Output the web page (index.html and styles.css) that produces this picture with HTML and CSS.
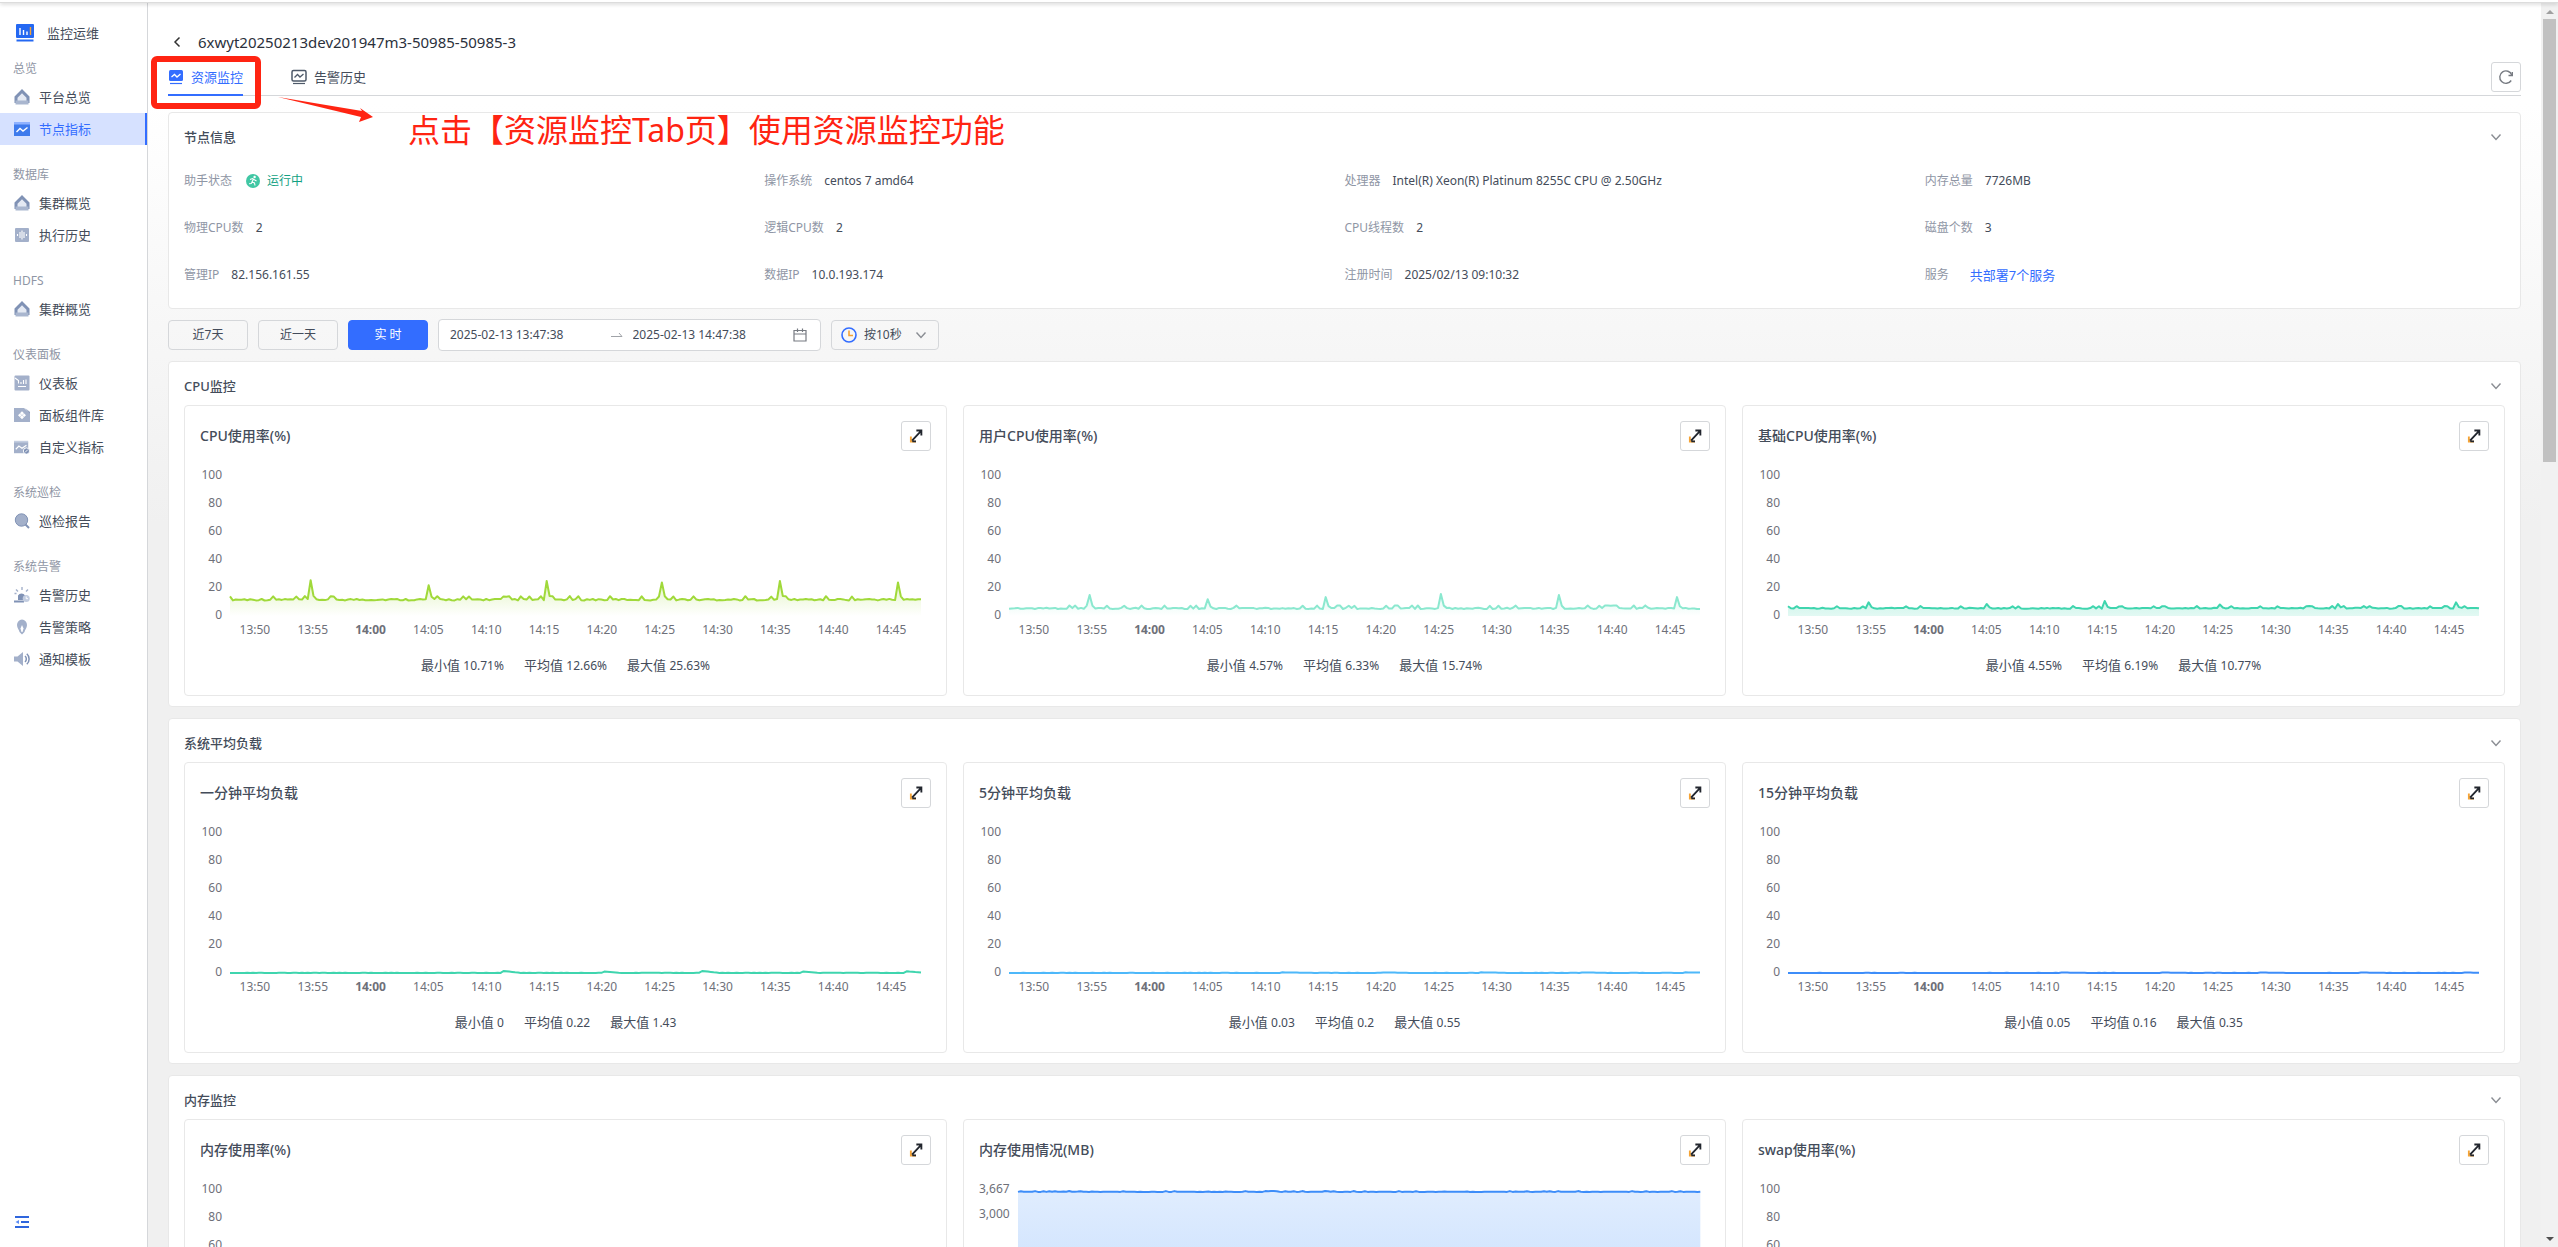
FILE: index.html
```html
<!DOCTYPE html>
<html lang="zh-CN">
	<head>
		<meta charset="UTF-8" />
		<meta name="viewport" content="width=device-width, initial-scale=1.0" />
		<title>监控运维</title>
		<link rel="stylesheet" href="styles.css">
	</head>
	<body>
		<svg class="sprite" aria-hidden="true">
			<symbol id="home" viewBox="0 0 16 16">
				<path d="M8 3L14 9V15H2V9Z" fill="#e4e9f3" />
				<path d="M8 0L0.5 7.5V14H3.5V8.800L8 4.300L12.5 8.800V14H15.5V7.5Z" fill="#8092b5" />
				<path d="M1.500 11.500H14.500V15.500H1.500Z" fill="#a9b6cf" />
			</symbol>
			<symbol id="trend" viewBox="0 0 16 16">
				<path d="M0 1H16V4H0Z" fill="#8fb2ff" />
				<path d="M0 3.5H16V15H0Z" fill="#3f7bec" />
				<path d="M2.5 11L6 7.5L9 10L13.5 6.5" fill="none" stroke="#fff" stroke-width="1.4" />
			</symbol>
			<symbol id="wave" viewBox="0 0 16 16">
				<rect x="1" y="1" width="14" height="14" rx="1" fill="#a3b0ca" />
				<path d="M3.5 7V9M6 5V11M8 3.5V12.5M10 5V11M12.5 7V9" stroke="#fff" stroke-width="1.1" />
			</symbol>
			<symbol id="board" viewBox="0 0 16 16">
				<rect x="0.5" y="0.5" width="15" height="15" rx="1" fill="#a3b0ca" />
				<path d="M1 3L4.500 5.500V8.500M7 7V9M9.5 5V9M12 4.500V9M4 11.500H12" fill="none" stroke="#fff" stroke-width="1.1" />
			</symbol>
			<symbol id="widget" viewBox="0 0 16 16">
				<path d="M0 1H10L16 6V15H0Z" fill="#a3b0ca" />
				<path d="M11 1L16 5V6.500Z" fill="#8092b5" />
				<path d="M8 4.2L10 6.2L8 8.2L6 6.2ZM8 8.2L10 10.2L8 12.2L6 10.2ZM5.8 6.4L7.6 8.2L5.8 10L4 8.2ZM10.2 6.4L12 8.2L10.2 10L8.4 8.2Z" fill="#fff" />
			</symbol>
			<symbol id="metric" viewBox="0 0 18 16">
				<path d="M0 1H16V3.5H0Z" fill="#c3cde0" />
				<path d="M0 3H16V15H0Z" fill="#a3b0ca" />
				<path d="M2 10.5L5.5 7L9 9.5L14 6" fill="none" stroke="#fff" stroke-width="1.3" />
				<circle cx="14" cy="12.5" r="3.5" fill="#8092b5" stroke="#fff" />
				<path d="M12.5 14L15.5 11" stroke="#fff" />
			</symbol>
			<symbol id="search" viewBox="0 0 16 16">
				<circle cx="7.5" cy="7" r="6.2" fill="#a3b0ca" stroke="#8092b5" />
				<path d="M11.5 11.5L15 15" stroke="#8092b5" stroke-width="2" />
			</symbol>
			<symbol id="alarm" viewBox="0 0 16 16">
				<path d="M4 13V8.500A4 4 0 0 1 11 8.500V13ZM0 13.500H10V15.500H0Z" fill="#8092b5" />
				<path d="M8 0V3M2 2.5L4 4.5M14 2.5L12 4.5M0.5 6.5H2.5" stroke="#a3b0ca" stroke-width="1.4" />
				<circle cx="12.2" cy="11.5" r="3.5" fill="#c3cde0" />
				<path d="M12.2 9.5V11.7H14" fill="none" stroke="#fff" />
			</symbol>
			<symbol id="bulb" viewBox="0 0 16 16">
				<path d="M8 0.5A5.5 5.5 0 0 1 13 6C13 9 11 10.5 10.5 13L8 15.5L5.5 13C5 10.5 3 9 3 6A5.5 5.5 0 0 1 8 0.5Z" fill="#a3b0ca" />
				<path d="M8 6L9.5 9.5L8.5 13H7.5L6.5 9.5Z" fill="#fff" />
			</symbol>
			<symbol id="sound" viewBox="0 0 16 16">
				<path d="M0 5.5H3.5L9 1V15L3.5 10.5H0Z" fill="#a3b0ca" />
				<path d="M11 5A4 4 0 0 1 11 11M12.8 2.8A7 7 0 0 1 12.8 13.2" fill="none" stroke="#8092b5" stroke-width="1.5" />
			</symbol>
			<symbol id="down" viewBox="0 0 12 12">
				<path d="M1.5 3.5L6 8.5L10.5 3.5" fill="none" stroke="#8a8d93" stroke-width="1.4" />
			</symbol>
			<symbol id="expand" viewBox="0 0 12 12">
				<path d="M1.6 6.500V10.8H6" fill="none" stroke="#f5a335" stroke-width="1.6" />
				<path d="M6.3 1.3H10.6V5.6M10.200 1.8L2.6 10M2.800 10.600H6" fill="none" stroke="#22262e" stroke-width="1.6" />
			</symbol>
		</svg>

		<div class="topbar"></div>
		<div class="layout">
			<aside class="sidebar">
				<div class="brand">
					<svg width="20" height="18" viewBox="0 0 20 18">
						<rect x="1" y="0" width="18" height="14" rx="1" fill="#2468f2" />
						<path d="M5 4V11M8.5 6V11M12 7.5V11" stroke="#fff" stroke-width="1.4" />
						<path d="M15.5 3V11" stroke="#f5a335" stroke-width="1.4" />
						<path d="M1.5 16.5H18.5" stroke="#2468f2" stroke-width="2" />
					</svg>
					<span>监控运维</span>
				</div>
				<nav class="menu">
					<div class="group">
						<p>总览</p>
						<a href="#"><svg><use href="#home" /></svg>平台总览</a>
						<a href="#" class="active"><svg><use href="#trend" /></svg>节点指标</a>
					</div>
					<div class="group">
						<p>数据库</p>
						<a href="#"><svg><use href="#home" /></svg>集群概览</a>
						<a href="#"><svg><use href="#wave" /></svg>执行历史</a>
					</div>
					<div class="group">
						<p>HDFS</p>
						<a href="#"><svg><use href="#home" /></svg>集群概览</a>
					</div>
					<div class="group">
						<p>仪表面板</p>
						<a href="#"><svg><use href="#board" /></svg>仪表板</a>
						<a href="#"><svg><use href="#widget" /></svg>面板组件库</a>
						<a href="#"><svg><use href="#metric" /></svg>自定义指标</a>
					</div>
					<div class="group">
						<p>系统巡检</p>
						<a href="#"><svg><use href="#search" /></svg>巡检报告</a>
					</div>
					<div class="group">
						<p>系统告警</p>
						<a href="#"><svg><use href="#alarm" /></svg>告警历史</a>
						<a href="#"><svg><use href="#bulb" /></svg>告警策略</a>
						<a href="#"><svg><use href="#sound" /></svg>通知模板</a>
					</div>
				</nav>
				<button class="fold" aria-label="收起菜单">
					<svg width="14" height="12" viewBox="0 0 14 12">
						<path d="M0 1H14M6 6H14M0 11H14" stroke="#2f66dd" stroke-width="2" />
						<path d="M0.5 6L4 4V8Z" fill="#5b8df5" />
					</svg>
				</button>
			</aside>

			<main class="content">
				<header class="page-title">
					<button aria-label="返回">
						<svg width="8" height="12" viewBox="0 0 8 12"><path d="M6.5 1.5L2 6L6.5 10.5" fill="none" stroke="#333" stroke-width="1.5" /></svg>
					</button>
					<h1>6xwyt20250213dev201947m3-50985-50985-3</h1>
				</header>

				<div class="tabs">
					<a href="#" class="tab on">
						<svg width="16" height="16" viewBox="0 0 16 16">
							<rect x="1" y="1" width="14" height="11" rx="1.5" fill="#336dff" />
							<path d="M3.5 8L6.5 5.5L9 8L12.5 5" fill="none" stroke="#fff" stroke-width="1.3" />
							<path d="M2 14.5H14" stroke="#336dff" stroke-width="1.2" />
						</svg>
						资源监控
					</a>
					<a href="#" class="tab">
						<svg width="16" height="16" viewBox="0 0 16 16">
							<rect x="1" y="1.5" width="14" height="10.5" rx="1.5" fill="none" stroke="#4e5969" stroke-width="1.5" />
							<path d="M3.5 8.5L6.5 5.5L9 8L12.5 5" fill="none" stroke="#4e5969" stroke-width="1.3" />
							<path d="M2 14.5H14" stroke="#4e5969" stroke-width="1.2" />
						</svg>
						告警历史
					</a>
					<button class="square refresh" aria-label="刷新">
						<svg width="16" height="16" viewBox="0 0 16 16">
							<path d="M13.2 11.5A6.2 6.2 0 1 1 13.8 6" fill="none" stroke="#777b82" stroke-width="1.4" />
							<path d="M10.5 6.5H14.3V3" fill="none" stroke="#777b82" stroke-width="1.4" />
						</svg>
					</button>
				</div>

				<section class="panel info">
					<div class="panel-head">
						<h2>节点信息</h2>
						<button aria-label="折叠"><svg><use href="#down" /></svg></button>
					</div>
					<dl>
						<div>
							<dt>助手状态</dt>
							<dd class="running">
								<svg width="14" height="14" viewBox="0 0 14 14">
									<circle cx="7" cy="7" r="7" fill="#41c7a4" />
									<circle cx="8.6" cy="3" r="1.2" fill="#fff" />
									<path d="M4 5.5L6.5 4.5L8 5.5L10.5 7M7.5 5L6 8L8.5 9L9 11.5M6 8L5.2 9.5L3 9.8" fill="none" stroke="#fff" stroke-width="1.1" />
								</svg>
								运行中
							</dd>
						</div>
						<div><dt>操作系统</dt><dd>centos 7 amd64</dd></div>
						<div><dt>处理器</dt><dd>Intel(R) Xeon(R) Platinum 8255C CPU @ 2.50GHz</dd></div>
						<div><dt>内存总量</dt><dd>7726MB</dd></div>
						<div><dt>物理CPU数</dt><dd>2</dd></div>
						<div><dt>逻辑CPU数</dt><dd>2</dd></div>
						<div><dt>CPU线程数</dt><dd>2</dd></div>
						<div><dt>磁盘个数</dt><dd>3</dd></div>
						<div><dt>管理IP</dt><dd>82.156.161.55</dd></div>
						<div><dt>数据IP</dt><dd>10.0.193.174</dd></div>
						<div><dt>注册时间</dt><dd>2025/02/13 09:10:32</dd></div>
						<div><dt>服务</dt><dd class="services"><a href="#">共部署7个服务</a></dd></div>
					</dl>
				</section>

				<div class="toolbar">
					<button>近7天</button>
					<button>近一天</button>
					<button class="primary">实 时</button>
					<div class="range">
						<input type="text" value="2025-02-13 13:47:38" aria-label="开始时间" />
						<svg width="12" height="8" viewBox="0 0 12 8"><path d="M0 5.5H11L8 2" fill="none" stroke="#a0a3a8" /></svg>
						<input type="text" value="2025-02-13 14:47:38" aria-label="结束时间" />
						<svg width="14" height="14" viewBox="0 0 14 14">
							<path d="M1 2.5H13V13H1ZM1 6H13M4.5 0.5V4M9.5 0.5V4" fill="none" stroke="#777b82" stroke-width="1.2" />
						</svg>
					</div>
					<label class="step">
						<svg width="16" height="16" viewBox="0 0 16 16">
							<circle cx="8" cy="8" r="7" fill="none" stroke="#336dff" stroke-width="1.6" />
							<path d="M8 3.5V8.5H12" fill="none" stroke="#f5a335" stroke-width="1.6" />
						</svg>
						<select aria-label="采样间隔"><option>按10秒</option></select>
						<svg class="arrow"><use href="#down" /></svg>
					</label>
				</div>

				<div id="panels"></div>

				<div class="note-box"></div>
				<svg class="note-arrow" viewBox="0 0 96 26">
					<path d="M0 0L84 14L82 11L95 20L81 25L83 20Z" fill="#ff2412" />
				</svg>
				<p class="note-text">点击【资源监控Tab页】使用资源监控功能</p>
			</main>

			<div class="scrollbar" aria-hidden="true">
				<i class="up"></i>
				<div class="thumb"></div>
				<i class="dn"></i>
			</div>
		</div>
		<script src="script.js"></script>
	</body>
</html>
```

FILE: styles.css
```css
* {
	box-sizing: border-box;
}
body {
	margin: 0;
	height: 100vh;
	display: flex;
	flex-direction: column;
	overflow: hidden;
	background-color: #fff;
	color: #444c5a;
	font-family: "Noto Sans", "Noto Sans CJK SC", sans-serif;
	font-size: 13px;
	line-height: 20px;
}
h1,
h2,
h3,
p,
dl,
dd {
	margin: 0;
}
a {
	color: inherit;
	text-decoration: none;
}
button,
input,
select {
	font: inherit;
	color: inherit;
}
button {
	padding: 0;
	border: none;
	background: none;
	cursor: pointer;
}
svg {
	flex: none;
}
.sprite {
	position: absolute;
	width: 0;
	height: 0;
}
.topbar {
	height: 3px;
	flex: none;
	border-bottom: 1px solid #dcdcdc;
	box-shadow: 0 1px 4px rgba(0, 0, 0, 0.2);
	z-index: 2;
}
.layout {
	flex: 1;
	min-height: 0;
	display: flex;
}

/* sidebar */
.sidebar {
	width: 148px;
	flex: none;
	display: flex;
	flex-direction: column;
	border-right: 1px solid #d5d7da;
}
.brand {
	height: 56px;
	padding: 4px 0 0 15px;
	display: flex;
	align-items: center;
	gap: 12px;
}
.group + .group {
	margin-top: 20px;
}
.group p {
	margin-bottom: 2px;
	padding-left: 13px;
	font-size: 12px;
	line-height: 20px;
	color: #8f96a5;
}
.group a {
	height: 32px;
	padding-left: 14px;
	display: flex;
	align-items: center;
	gap: 9px;
}
.group svg {
	width: 16px;
	height: 16px;
}
.group .active {
	background-color: #d6e1ff;
	border-right: 2px solid #336dff;
	color: #336dff;
}
.fold {
	margin: auto auto 19px 15px;
	display: flex;
}

/* content */
.content {
	flex: 1;
	min-width: 0;
	padding: 26px 20px 12px;
	position: relative;
	overflow-y: auto;
	scrollbar-width: none;
	background: linear-gradient(#fff 100px, #f0f0f0 520px);
}
.page-title {
	height: 28px;
	padding: 0 0 3px 5px;
	display: flex;
	align-items: center;
	gap: 17px;
}
.page-title button {
	display: flex;
}
.page-title h1 {
	font-size: 15px;
	font-weight: 400;
	color: #2b313c;
}
.tabs {
	height: 39px;
	display: flex;
	border-bottom: 1px solid #d5d7da;
}
.tab {
	height: 39px;
	margin-right: 48px;
	display: flex;
	align-items: center;
	gap: 7px;
}
.tab.on {
	color: #336dff;
	border-bottom: 2px solid #336dff;
	border-top: 2px solid transparent;
}
.square {
	width: 30px;
	height: 30px;
	display: flex;
	align-items: center;
	justify-content: center;
	background-color: #fff;
	border: 1px solid #d5d7da;
	border-radius: 3px;
}
.refresh {
	margin: 5px 0 0 auto;
}
.panel {
	background-color: #fff;
	border: 1px solid #e8e8e8;
	border-radius: 4px;
	padding: 0 15px 10px;
}
.panel + .panel {
	margin-top: 11px;
}
.panel-head {
	height: 43px;
	padding-top: 4px;
	display: flex;
	align-items: center;
	justify-content: space-between;
}
.panel-head h2 {
	font-size: 13px;
	font-weight: 500;
}
.panel-head button {
	margin-right: 3px;
	display: flex;
}
.panel-head svg {
	width: 12px;
	height: 12px;
}
.info {
	margin-top: 16px;
}
.info dl {
	padding-top: 1px;
	display: grid;
	grid-template-columns: repeat(4, 1fr);
	grid-auto-rows: 47px;
	font-size: 12px;
}
.info dl div {
	display: flex;
	align-items: center;
	gap: 12px;
}
.info dt {
	color: #8f96a5;
}
.info .running {
	display: flex;
	align-items: center;
	gap: 7px;
	padding-left: 2px;
	color: #12a182;
}
.info .services {
	padding-left: 9px;
	font-size: 13px;
	color: #336dff;
}

/* toolbar */
.toolbar {
	height: 52px;
	display: flex;
	align-items: center;
	gap: 10px;
}
.toolbar button {
	width: 80px;
	height: 30px;
	border: 1px solid #d5d7da;
	border-radius: 4px;
	font-size: 12px;
}
.toolbar .primary {
	background-color: #336dff;
	border-color: #336dff;
	color: #fff;
}
.range {
	width: 383px;
	height: 32px;
	padding: 0 13px 0 11px;
	display: flex;
	align-items: center;
	gap: 10px;
	background-color: #fff;
	border: 1px solid #d5d7da;
	border-radius: 4px;
}
.range input {
	flex: 1;
	min-width: 0;
	padding: 0;
	border: none;
	outline: none;
	background: none;
	font-size: 12px;
}
.step {
	width: 108px;
	height: 30px;
	padding: 0 11px 0 9px;
	display: flex;
	align-items: center;
	gap: 7px;
	border: 1px solid #d5d7da;
	border-radius: 4px;
}
.step select {
	flex: 1;
	min-width: 0;
	padding: 0;
	border: none;
	outline: none;
	background: none;
	appearance: none;
	font-size: 12px;
}
.step .arrow {
	width: 12px;
	height: 12px;
}

/* charts */
.cards {
	display: grid;
	grid-template-columns: repeat(3, 1fr);
	gap: 16px;
}
.card {
	min-width: 0;
	padding: 15px 15px 19px;
	border: 1px solid #e8e8e8;
	border-radius: 4px;
}
.card-head {
	display: flex;
	align-items: center;
	justify-content: space-between;
}
.card-head h3 {
	font-size: 14px;
	font-weight: 500;
}
.card-head svg {
	width: 14px;
	height: 14px;
}
.chart {
	margin: 14px 10px 0 0;
	display: flex;
	gap: 8px;
	font-size: 12px;
	color: #6e7079;
}
.y-axis {
	min-width: 22px;
	text-align: right;
}
.plot {
	flex: 1;
	min-width: 0;
	padding-top: 11px;
}
.plot svg {
	display: block;
	width: 100%;
	height: 140px;
	overflow: visible;
}
.plot path {
	vector-effect: non-scaling-stroke;
}
.x-axis {
	margin: 4px 1px 0 -4px;
	display: flex;
}
.x-axis span {
	flex: 1;
	min-width: 0;
	text-align: center;
}
.x-axis .hour {
	font-weight: 700;
}
.stats {
	margin-top: 15px;
	display: flex;
	justify-content: center;
	gap: 20px;
}
.stats b {
	font-size: 12px;
	font-weight: 400;
}

/* callout over the tab */
.note-box {
	position: absolute;
	left: 3px;
	top: 53px;
	width: 110px;
	height: 53px;
	border: 6px solid #ff2412;
	border-radius: 6px;
}
.note-arrow {
	position: absolute;
	left: 130px;
	top: 94px;
	width: 96px;
	height: 26px;
}
.note-text {
	position: absolute;
	left: 260px;
	top: 104px;
	font-size: 32px;
	line-height: 46px;
	color: #ff2412;
}

/* scrollbar */
.scrollbar {
	width: 17px;
	flex: none;
	padding: 7px 2px 6px;
	display: flex;
	flex-direction: column;
	background-color: #f1f1f1;
}
.scrollbar i {
	align-self: center;
	border: 4px solid transparent;
}
.scrollbar .up {
	border-top: none;
	border-bottom-color: #a0a0a0;
}
.scrollbar .dn {
	margin-top: auto;
	border-bottom: none;
	border-top-color: #505050;
}
.thumb {
	height: 36%;
	margin-top: 5px;
	background-color: #c1c1c1;
}
```

FILE: script.js
```js
const times = ["13:50", "13:55", "14:00", "14:05", "14:10", "14:15", "14:20", "14:25", "14:30", "14:35", "14:40", "14:45"];
const percent = [100, 80, 60, 40, 20, 0];
const memory = [3667, 3000, 2000, 1000, 0];
const peaks = [0.117, 0.287, 0.457, 0.627, 0.797, 0.967];
const loads = [0.395, 0.54, 0.685, 0.83, 0.98];

const panels = [
	{
		title: "CPU监控",
		cards: [
			{ title: "CPU使用率(%)", color: "#a0d93a", fade: [0.3, 0], base: 11.6, noise: 2.6, at: peaks, spikes: [25.6, 22, 25, 24, 25, 24], stats: ["10.71%", "12.66%", "25.63%"] },
			{ title: "用户CPU使用率(%)", color: "#8be8cf", fade: [0.3, 0], base: 5.4, noise: 2.2, at: peaks, spikes: [15, 12, 13.5, 15.7, 15, 13.5], stats: ["4.57%", "6.33%", "15.74%"] },
			{ title: "基础CPU使用率(%)", color: "#3fd5ae", fade: [0.25, 0.15], base: 5.5, noise: 1.6, at: peaks, spikes: [9.8, 8.6, 10.7, 8.2, 8.6, 9.8], stats: ["4.55%", "6.19%", "10.77%"] },
		],
	},
	{
		title: "系统平均负载",
		cards: [
			{ title: "一分钟平均负载", color: "#3fd5ae", fade: [0.2, 0.1], base: 0.1, noise: 0.1, at: loads, spikes: [1.4, 1, 1.4, 1, 1.2], tail: 5, stats: ["0", "0.22", "1.43"] },
			{ title: "5分钟平均负载", color: "#4db8fa", fade: [0.2, 0.1], base: 0.1, noise: 0.05, at: loads, spikes: [0.5, 0.4, 0.5, 0.4, 0.5], tail: 8, stats: ["0.03", "0.2", "0.55"] },
			{ title: "15分钟平均负载", color: "#3d8df9", fade: [0.2, 0.1], base: 0.1, noise: 0.03, at: loads, spikes: [0.3, 0.3, 0.3, 0.3, 0.3], tail: 8, stats: ["0.05", "0.16", "0.35"] },
		],
	},
	{
		title: "内存监控",
		cards: [
			{ title: "内存使用率(%)", color: "#a0d93a", fade: [0.3, 0], base: 47, noise: 0.5, stats: ["46.9%", "47.1%", "47.4%"] },
			{ title: "内存使用情况(MB)", color: "#3d8df9", fade: [0.16, 0.3], ticks: memory, base: 3620, noise: 18, stats: ["3,590", "3,620", "3,667"] },
			{ title: "swap使用率(%)", color: "#3d8df9", fade: [0.2, 0.1], base: 0, noise: 0, stats: ["0%", "0%", "0%"] },
		],
	},
];

// one hour of samples, 240 points
function samples(card, seed) {
	const n = 240;
	const list = [];
	for (let i = 0; i <= n; i++) {
		const r = Math.abs(Math.sin((i + 1) * 12.9898 + seed * 78.233) * 43758.5453) % 1;
		list.push(card.base + (r > 0.85 ? r : r * 0.5 - 0.2) * card.noise);
	}
	(card.at || []).forEach((pos, k) => {
		const i = Math.round(pos * n);
		const tail = card.tail || 1;
		list[i] = card.spikes[k];
		for (let j = 1; j <= tail; j++) {
			const rest = card.base + (card.spikes[k] - card.base) * (1 - j / (tail + 1)) * (card.tail ? 1 : 0.4);
			if (i + j <= n) list[i + j] = rest;
		}
	});
	return list;
}

function plot(card, id) {
	const max = (card.ticks || percent)[0];
	const list = samples(card, id);
	const line = list.map((v, i) => `${((i / (list.length - 1)) * 1000).toFixed(1)} ${(140 - (v / max) * 140).toFixed(1)}`).join("L");
	return `<svg viewBox="0 0 1000 140" preserveAspectRatio="none">
		<linearGradient id="fade${id}" x1="0" y1="0" x2="0" y2="1">
			<stop offset="0" stop-color="${card.color}" stop-opacity="${card.fade[0]}" />
			<stop offset="1" stop-color="${card.color}" stop-opacity="${card.fade[1]}" />
		</linearGradient>
		<path d="M${line}L1000 140L0 140Z" fill="url(#fade${id})" />
		<path d="M${line}" fill="none" stroke="${card.color}" stroke-width="2" stroke-linejoin="round" />
	</svg>`;
}

function yAxis(ticks) {
	return ticks
		.map((v, i) => {
			const height = i < ticks.length - 1 ? ((v - ticks[i + 1]) / ticks[0]) * 140 : 20;
			return `<div style="height: ${height}px">${v.toLocaleString("en-US")}</div>`;
		})
		.join("");
}

function cardHtml(card, id) {
	const names = ["最小值", "平均值", "最大值"];
	return `<article class="card">
		<div class="card-head">
			<h3>${card.title}</h3>
			<button class="square" aria-label="放大"><svg><use href="#expand" /></svg></button>
		</div>
		<div class="chart">
			<div class="y-axis">${yAxis(card.ticks || percent)}</div>
			<div class="plot">
				${plot(card, id)}
				<div class="x-axis">${times.map((t) => `<span class="${t.endsWith(":00") ? "hour" : ""}">${t}</span>`).join("")}</div>
			</div>
		</div>
		<div class="stats">${card.stats.map((s, i) => `<span>${names[i]} <b>${s}</b></span>`).join("")}</div>
	</article>`;
}

document.querySelector("#panels").innerHTML = panels
	.map(
		(panel, p) => `<section class="panel">
		<div class="panel-head">
			<h2>${panel.title}</h2>
			<button aria-label="折叠"><svg><use href="#down" /></svg></button>
		</div>
		<div class="cards">${panel.cards.map((card, c) => cardHtml(card, p * 3 + c)).join("")}</div>
	</section>`
	)
	.join("");
```
